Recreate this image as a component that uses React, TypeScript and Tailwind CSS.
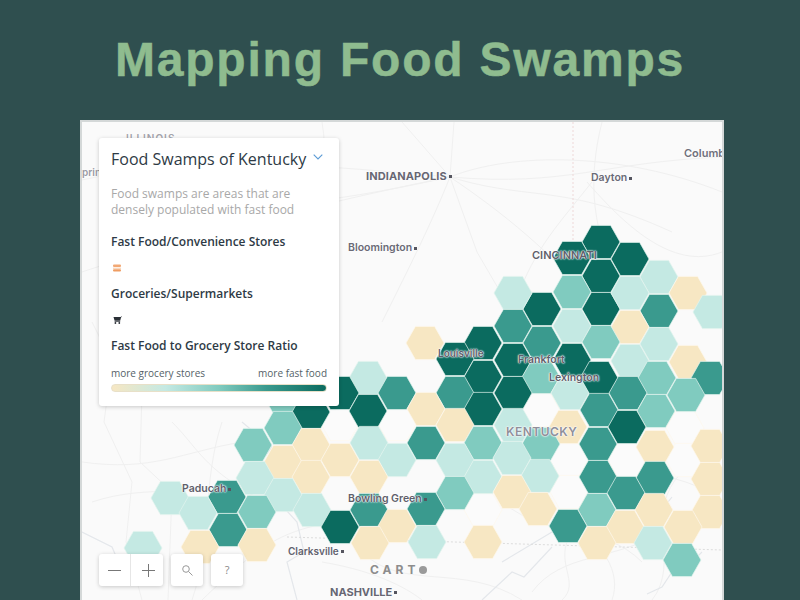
import type { ReactNode } from "react";

const D = "#0b6b5f", M = "#3a9a8e", L = "#80cbbf", P = "#c4e9e3", C = "#f7e7c3", W = "#fbfbfb";

const hexes: [number, number, string][] = [
  [397,424,W],[340,424,W],[569,460,W],[627,460,W],[685,428,W],[685,460,W],[483,510,W],[569,492,W],[541,410,W],
  [601,242,D],[572,258,D],[630,259,D],[601,276,D],[572,292,L],[659,277,P],[601,309,D],[542,309,D],[513,293,P],[630,293,P],[688,293,C],[659,311,M],[712,312,P],[513,326,M],[572,326,P],[630,327,C],[542,343,M],[601,342,L],[659,344,P],[483,343,D],[425,343,C],[513,360,D],[572,360,D],[455,359,D],[630,361,P],[688,362,C],[368,378,P],[483,377,D],[541,377,L],[599,378,D],[657,378,L],[710,378,M],[340,393,D],[397,393,M],[455,393,M],[513,393,D],[570,393,P],[628,393,M],[686,395,L],[283,397,L],[311,412,D],[368,411,D],[426,409,C],[483,409,D],[599,410,M],[656,411,L],[283,428,L],[513,425,P],[455,425,C],[568,427,C],[627,427,D],[253,445,L],[311,445,C],[369,443,P],[426,443,M],[483,443,L],[541,444,L],[598,444,M],[655,447,C],[710,446,C],[283,462,C],[340,460,C],[397,460,P],[455,460,P],[512,458,P],[255,478,P],[311,477,C],[369,477,C],[483,477,P],[540,476,P],[598,477,M],[655,478,M],[710,479,C],[170,498,P],[227,497,M],[283,495,P],[455,493,L],[512,492,C],[626,493,M],[198,513,P],[257,512,L],[312,510,P],[369,510,M],[426,509,M],[538,509,C],[597,510,L],[654,510,C],[710,512,C],[228,530,M],[340,527,D],[397,526,C],[568,526,M],[625,527,C],[683,527,C],[143,548,P],[200,547,C],[257,545,C],[370,543,C],[427,542,P],[483,542,C],[597,543,C],[653,543,P],[682,560,L],
];

const roads = [
  "M0 58 C120 30 250 45 368 55 S520 40 640 35",
  "M0 150 C90 120 240 80 368 55",
  "M368 55 C430 30 540 30 640 70",
  "M368 55 C420 90 470 130 520 190",
  "M368 55 C350 100 330 140 300 200",
  "M368 55 C300 70 200 90 60 90",
  "M368 55 C450 80 480 60 590 110",
  "M368 55 L372 0",
  "M320 0 L368 55 L395 130 L430 190",
  "M240 0 C250 60 230 120 250 190",
  "M520 0 C505 60 510 110 540 170",
  "M640 130 C590 150 540 100 505 60",
  "M510 60 C470 110 450 130 430 190",
  "M10 200 L30 240 L22 300 L50 360 L44 420 L60 478",
  "M60 270 L58 340 L90 370 L86 478",
  "M140 300 C120 360 130 420 110 478",
  "M10 380 C70 360 110 380 180 350",
  "M0 340 C70 350 100 330 160 320",
  "M225 210 L232 250 L215 280 L250 310",
  "M90 300 C110 320 120 340 150 360",
  "M120 478 C180 420 200 410 250 400",
  "M600 350 C560 390 600 440 570 478",
  "M420 380 C470 420 520 400 560 440",
  "M280 430 C320 470 380 440 440 478",
  "M490 410 C470 440 500 460 480 478",
  "M510 340 C540 360 590 340 640 380",
  "M240 440 C300 450 330 470 340 478",
  "M450 470 C480 430 530 440 580 410",
  "M530 478 C540 450 520 420 490 405",
];
const rivers = [
  "M150 400 L165 375 L178 368 L195 378 L215 400 L222 430 L205 440 L215 478",
  "M510 430 L530 418 L545 420 L570 400 L590 375",
  "M620 430 L608 442 L590 450 L580 465 L565 472",
  "M420 440 L445 425 L470 410 L500 395",
  "M160 300 L190 325 L175 345 L150 370",
  "M0 410 L30 425 L45 460",
  "M400 478 L430 450 L442 455 L470 425",
];

const labels: [string, number, number, string, boolean][] = [
  ["Columb", 602, 25, "text-[11px] font-semibold text-[#70707c]", false],
  ["prin", 0, 44, "text-[10px] font-semibold text-[#9a9aa4]", false],
  ["ILLINOIS", 44, 10, "text-[10px] font-semibold text-[#a4a4ac] tracking-[0.1em]", false],
  ["INDIANAPOLIS", 284, 48, "text-[11px] font-bold text-[#676773] tracking-[0.01em]", true],
  ["Dayton", 509, 50, "text-[10.5px] font-semibold text-[#6a6a76]", true],
  ["Bloomington", 266, 120, "text-[10.5px] font-semibold text-[#6a6a76]", true],
  ["CINCINNATI", 450, 127, "text-[11px] font-semibold text-[#5f5f6b]", false],
  ["Louisville", 356, 225, "text-[10px] font-semibold text-[#5f5f6b]", false],
  ["Frankfort", 436, 232, "text-[10.5px] font-semibold text-[#5f5f6b]", false],
  ["Lexington", 467, 250, "text-[10.5px] font-semibold text-[#5f5f6b]", false],
  ["KENTUCKY", 424, 304, "text-[12px] font-semibold text-[#8f8f9a] tracking-[0.04em]", false],
  ["Paducah", 100, 361, "text-[10.5px] font-semibold text-[#5f5f6b]", true],
  ["Bowling Green", 266, 371, "text-[10.5px] font-semibold text-[#5f5f6b]", true],
  ["Clarksville", 206, 423, "text-[10px] font-semibold text-[#62626e]", true],
  ["NASHVILLE", 248, 464, "text-[11px] font-bold text-[#676773]", true],
];

const Ctl = ({ children, className = "" }: { children: ReactNode; className?: string }) => (
  <div className={"flex h-8 w-8 items-center justify-center " + className}>{children}</div>
);

export default function App() {
  return (
    <div className="flex h-[600px] w-[800px] flex-col overflow-hidden bg-[#2f4f4f]">
      <h1 className="h-[120px] pt-[32px] text-center font-['Liberation_Sans',sans-serif] text-[48px] leading-[56px] font-bold tracking-[1.8px] text-[#8fbc8f] [-webkit-text-stroke:0.5px_#8fbc8f]">
        Mapping Food Swamps
      </h1>
      <div className="relative mx-[80px] h-[480px] w-[644px] overflow-hidden border-2 border-b-0 border-[#d4d8d8] bg-[#fafafa] font-['Inter',sans-serif]">
        <svg className="absolute top-0 left-0" width="640" height="478" viewBox="0 0 640 478">
          <g fill="none" stroke="#f0f0f0" strokeWidth="1">
            {roads.map((d, i) => <path key={i} d={d} />)}
          </g>
          <g fill="none" stroke="#e4e7eb" strokeWidth="1.2">
            {rivers.map((d, i) => <path key={i} d={d} />)}
          </g>
          <path d="M491 0 L491 118" fill="none" stroke="#eed8d8" strokeWidth="1" strokeDasharray="2 2" />
          <path d="M205 415 L640 428" fill="none" stroke="#dddddd" strokeWidth="1" strokeDasharray="2 2" />
          <g transform="translate(-82 -122)">
            {hexes.map(([x, y, c], i) => (
              <polygon
                key={i}
                points={`${x - 19},${y} ${x - 9.6},${y - 16.6} ${x + 9.6},${y - 16.6} ${x + 19},${y} ${x + 9.6},${y + 16.6} ${x - 9.6},${y + 16.6}`}
                fill={c}
                stroke={c === C || c === W ? "#fdf8ec" : "#e3f3ee"}
                strokeWidth="0.7"
              />
            ))}
          </g>
        </svg>

        {labels.map(([t, x, y, cls, dot]) => (
          <span
            key={t}
            className={"absolute flex items-center gap-[2px] leading-[12px] whitespace-nowrap [text-shadow:0_0_2px_#fff,0_0_2px_#fff,0_0_1px_#fff] " + cls}
            style={{ left: x, top: y }}
          >
            {t}
            {dot && <i className="inline-block h-[3px] w-[3px] bg-[#55555f]" />}
          </span>
        ))}

        <div className="absolute top-[442px] left-[288px] flex items-center text-[12px] leading-[12px] font-bold tracking-[4px] text-[#8d8d8d]">
          CART
          <i className="inline-block h-[8px] w-[8px] rounded-full bg-[#9a9a9a]" />
        </div>

        <div className="absolute top-4 left-[17px] flex h-[268px] w-[240px] flex-col rounded-[3px] bg-white px-3 font-['Open_Sans',sans-serif] shadow-[0_1px_4px_rgba(0,0,0,0.2)]">
          <div className="flex items-center gap-[7px] pt-[9px]">
            <span className="text-[16px] leading-[24px] whitespace-nowrap text-[#2e3a45]">Food Swamps of Kentucky</span>
            <svg width="10" height="6" viewBox="0 0 10 6" className="mb-1" fill="none" stroke="#5b9bd5" strokeWidth="1.1"><path d="M0.7 0.7 L5 5 L9.3 0.7" /></svg>
          </div>
          <p className="mt-[15px] text-[12px] leading-[16px] text-[#a8a8a8]">
            Food swamps are areas that are<br />densely populated with fast food
          </p>
          <h2 className="mt-[16px] text-[12px] leading-[16px] font-semibold text-[#2e3a45]">Fast Food/Convenience Stores</h2>
          <div className="mt-[14px] flex h-[8px] items-center">
            <svg width="8" height="8" viewBox="0 0 8 8" className="ml-[2px]">
              <rect x="0" y="0.5" width="8" height="2.6" rx="1" fill="#f2a874" />
              <rect x="0" y="3.7" width="8" height="1" fill="#f7c9a5" />
              <rect x="0" y="5.2" width="8" height="2.4" rx="1" fill="#ef9d63" />
            </svg>
          </div>
          <h2 className="mt-[14px] text-[12px] leading-[16px] font-semibold text-[#2e3a45]">Groceries/Supermarkets</h2>
          <div className="mt-[14px] flex h-[8px] items-center">
            <svg width="9" height="8" viewBox="0 0 9 8" className="ml-[2px]">
              <path d="M0.5 1 H7.6 L8.6 0.2 L8.9 0.7 L8 1.5 L7.2 4.8 H1.6 Z" fill="#2a2f36" />
              <rect x="1.6" y="5.3" width="5.6" height="0.7" fill="#2a2f36" />
              <circle cx="2.4" cy="7" r="0.9" fill="#2a2f36" />
              <circle cx="6.3" cy="7" r="0.9" fill="#2a2f36" />
            </svg>
          </div>
          <h2 className="mt-[14px] text-[12px] leading-[16px] font-semibold text-[#2e3a45]">Fast Food to Grocery Store Ratio</h2>
          <div className="mt-[12px] flex justify-between text-[10px] leading-[14px] text-[#555f68]">
            <span>more grocery stores</span>
            <span>more fast food</span>
          </div>
          <div className="mt-[4px] h-2 w-full rounded-full border border-[#e8e0c8] bg-[linear-gradient(to_right,#f7e7c3_0%,#c4e9e3_25%,#80cbbf_50%,#3a9a8e_72%,#0b6b5f_100%)]" />
        </div>

        <div className="absolute top-[432px] left-[17px] flex gap-2 text-[#666]">
          <div className="flex rounded-[3px] bg-white shadow-[0_1px_4px_rgba(0,0,0,0.2)]">
            <Ctl className="border-r border-[#e6e6e6]">
              <svg width="13" height="13" viewBox="0 0 13 13"><path d="M0 6.5 H13" stroke="#777" strokeWidth="1" /></svg>
            </Ctl>
            <Ctl className="pl-[2px]">
              <svg width="13" height="13" viewBox="0 0 13 13"><path d="M0 6.5 H13 M6.5 0 V13" stroke="#777" strokeWidth="1" /></svg>
            </Ctl>
          </div>
          <Ctl className="rounded-[3px] bg-white shadow-[0_1px_4px_rgba(0,0,0,0.2)]">
            <svg width="11" height="11" viewBox="0 0 11 11" fill="none" stroke="#999" strokeWidth="1"><circle cx="4" cy="4" r="3.3" /><path d="M6.5 6.5 L10.5 10.5" /></svg>
          </Ctl>
          <Ctl className="rounded-[3px] bg-white font-['Open_Sans',sans-serif] text-[11px] text-[#888] shadow-[0_1px_4px_rgba(0,0,0,0.2)]">?</Ctl>
        </div>
      </div>
    </div>
  );
}
